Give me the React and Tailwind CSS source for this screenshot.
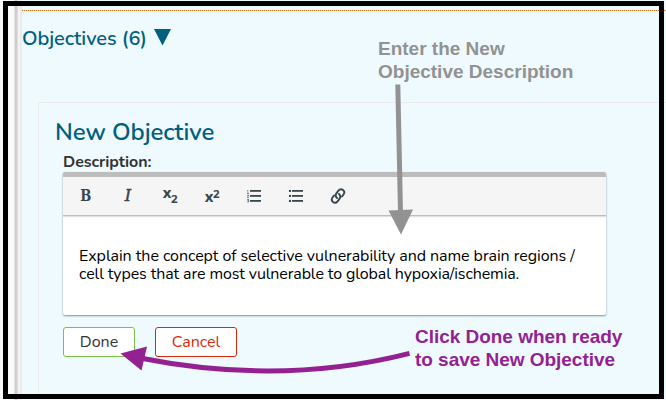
import React from "react";

const nunito = "font-['Nunito','Lato','Open_Sans',sans-serif]";
const helvetica = "font-['Liberation_Sans',Arial,sans-serif]";

function ListIcon({ ordered }) {
  return (
    <svg width="16" height="14" viewBox="0 0 16 14">
      <g fill="#37474f">
        <rect x="4" y="1" width="11" height="1.8" />
        <rect x="4" y="6" width="11" height="1.8" />
        <rect x="4" y="11" width="11" height="1.8" />
      </g>
      {ordered ? (
        <path fill="#37474f" opacity=".75" d="M1.2 1h1v3h1v.7H1V4h.6V1.8H1zM1 5.7h2v1.2L1.8 8H3v.7H1V7.900l1.200-1.100v-.4H1zM1 10h2v3.300H1v-.7h1.200v-.7H1.400v-.6h.8v-.6H1z" />
      ) : (
        <g fill="#37474f">
          <circle cx="2" cy="1.900" r="1.200" />
          <circle cx="2" cy="6.900" r="1.200" />
          <circle cx="2" cy="11.900" r="1.200" />
        </g>
      )}
    </svg>
  );
}

function LinkIcon() {
  return (
    <svg width="16" height="16" viewBox="0 0 16 16" fill="none" stroke="#37474f" strokeWidth="1.9" strokeLinecap="round" strokeLinejoin="round">
      <path d="M7 10C5.600 8.700 5.400 6.900 6.400 5.300L8.400 2.700c1.200-1.500 3.200-1.700 4.600-.6s1.700 2.800.5 4.400L12 8.500" />
      <path d="M9 6c1.400 1.300 1.600 3.100.6 4.700L7.600 13.300c-1.200 1.500-3.200 1.700-4.600.6s-1.700-2.800-.5-4.400L4 7.500" />
    </svg>
  );
}

function Tool({ label, children }) {
  return (
    <button aria-label={label} className="flex h-9 w-[42px] items-center justify-center text-[#37474f]">
      {children}
    </button>
  );
}

function Toolbar() {
  return (
    <div className="flex h-[39px] items-center border-b border-[#bdbdbd] bg-[#f5f5f5] pl-[2px] shadow-[0_1px_1px_#e0e0e0]">
      <Tool label="Bold">
        <span className="scale-x-[.82] font-['DejaVu_Serif',serif] text-[16px] font-bold leading-none">B</span>
      </Tool>
      <Tool label="Italic">
        <span className="font-['DejaVu_Serif',serif] text-[16px] italic leading-none [-webkit-text-stroke:0.5px_#37474f]">I</span>
      </Tool>
      <Tool label="Subscript">
        <span className="flex font-['Noto_Sans',sans-serif] font-bold leading-none">
          <span className="-mt-1 text-[15px]">x</span>
          <span className="mt-[5px] origin-left scale-x-[1.15] text-[10px]">2</span>
        </span>
      </Tool>
      <Tool label="Superscript">
        <span className="flex font-['Noto_Sans',sans-serif] font-bold leading-none">
          <span className="text-[15px]">x</span>
          <span className="origin-left scale-x-[1.15] text-[10px]">2</span>
        </span>
      </Tool>
      <Tool label="Numbered list"><ListIcon ordered /></Tool>
      <Tool label="Bulleted list"><ListIcon /></Tool>
      <Tool label="Link"><LinkIcon /></Tool>
    </div>
  );
}

function Editor() {
  return (
    <div className="h-[143px] w-[543px] overflow-hidden rounded-[2px] border-t-[5px] border-[#bdbdbd] bg-white shadow-[0_1px_2px_#78909c]">
      <Toolbar />
      <div className="whitespace-nowrap px-4 pt-[31px] text-[16px] leading-[18px] text-black">
        <p className="tracking-[-0.06px]">Explain the concept of selective vulnerability and name brain regions /</p>
        <p className="tracking-[-0.115px]">cell types that are most vulnerable to global hypoxia/ischemia.</p>
      </div>
    </div>
  );
}

function Annotations() {
  return (
    <div className={`pointer-events-none absolute inset-0 font-bold ${helvetica}`}>
      <svg className="absolute inset-0" width="666" height="400" viewBox="0 0 666 400">
        <path d="M397.800 84.500 400.500 212" stroke="#929292" strokeWidth="5" />
        <path d="M388.500 210.500 413 209.500 401 234.500Z" fill="#929292" />
        <path d="M140 358Q281 386 409.500 353.300" fill="none" stroke="#942192" strokeWidth="5" />
        <path d="M120.500 353.500 147 346.500 141.500 370.500Z" fill="#942192" />
      </svg>
      <p className="absolute left-[378px] top-[37px] whitespace-nowrap text-[19px] leading-[23px] text-[#929292]">
        Enter the New<br />Objective Description
      </p>
      <p className="absolute left-[415px] top-[325px] whitespace-nowrap text-[19px] leading-[23px] tracking-[-0.03px] text-[#942192]">
        Click Done when ready<br />to save New Objective
      </p>
      <div className="absolute left-[3px] top-px h-[398px] w-[661px] border-[5px] border-black" />
    </div>
  );
}

export default function App() {
  return (
    <div className={`relative flex h-[400px] w-[666px] overflow-hidden bg-[#effaff] ${nunito}`}>
      <div className="flex w-[22px] shrink-0 bg-[#fafafa]">
        <div className="w-[14px]" />
        <div className="w-px bg-[#e2e2e2]" />
        <div className="w-[2px] bg-[#cfcfcf]" />
        <div className="w-px bg-[#dedede]" />
        <div className="w-[2px] bg-[#f3f3f3]" />
        <div className="w-[2px] bg-[#ebebeb]" />
      </div>
      <main className="flex min-w-0 flex-1 flex-col pt-[10px]">
        <div className="h-px shrink-0 bg-[repeating-linear-gradient(90deg,#c6690f_0_1px,#efd4b8_1px_2px)]" />
        <header className="mt-[13px] flex h-[30px] shrink-0 items-center text-[#006080]">
          <h1 className="whitespace-nowrap text-[20px] font-semibold leading-[30px] tracking-[-0.08px]">Objectives (6)</h1>
          <svg className="mb-1 ml-[7px]" width="17" height="17" viewBox="0 0 17 17"><path d="M0 0h17L8.500 16.500Z" fill="#006080" /></svg>
        </header>
        <section className="ml-4 mt-12 flex w-[700px] flex-1 flex-col border-l border-t border-[#ebebeb] pl-4 pt-[11px]">
          <h2 className="whitespace-nowrap text-[24px] font-semibold leading-[36px] tracking-[-0.05px] text-[#006080]">New Objective</h2>
          <div className="ml-2 flex flex-col">
            <label className="h-[22px] text-[16px] font-bold leading-[25px] tracking-[-0.05px] text-[#333]">Description:</label>
            <Editor />
            <div className="mt-3 flex gap-5 text-[16px]">
              <button className="h-[30px] w-[72px] rounded-[3px] border border-[#7cc242] bg-white text-[#333]">Done</button>
              <button className="h-[30px] w-[82px] rounded-[3px] border border-[#d9290b] bg-white text-[#d9290b]">Cancel</button>
            </div>
          </div>
        </section>
      </main>
      <Annotations />
    </div>
  );
}
